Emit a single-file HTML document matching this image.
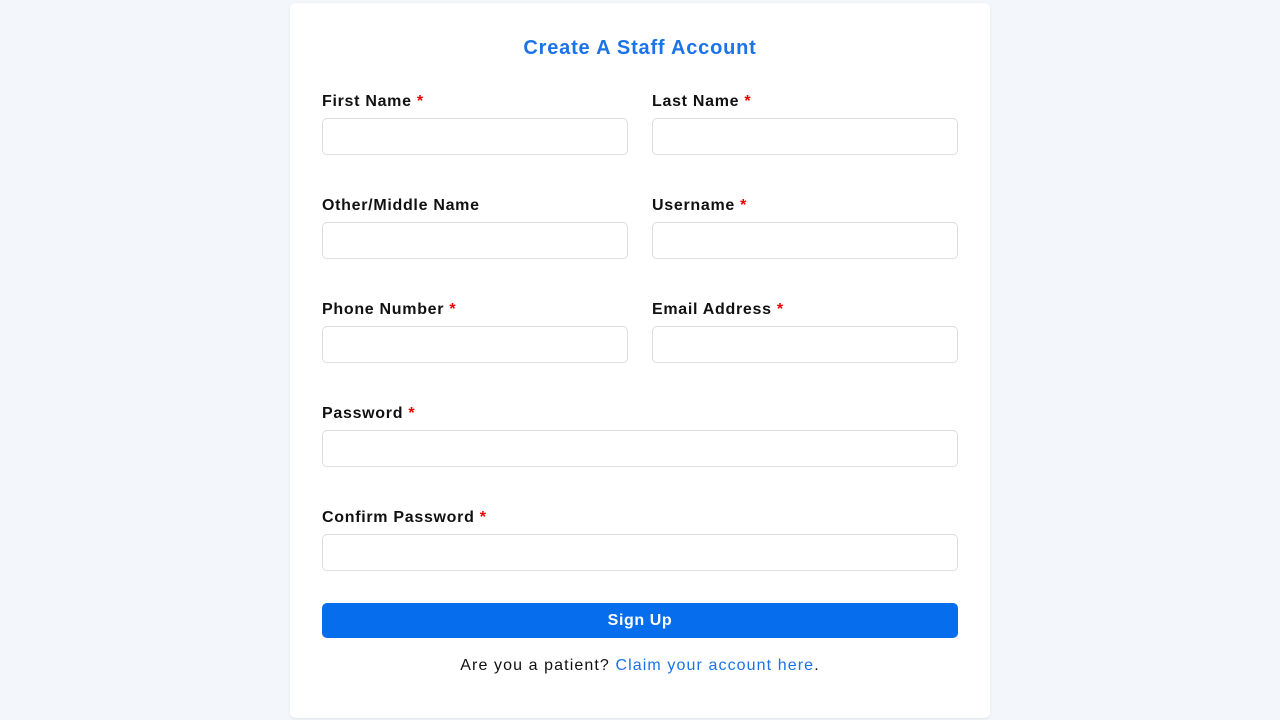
<!DOCTYPE html>
<html><head><style>
body{margin:0;background:#f3f6fb;font-family:"Liberation Sans",sans-serif;width:1280px;height:720px;position:relative;overflow:hidden}
.card{position:absolute;left:290px;top:3px;width:700px;height:715px;background:#fff;border-radius:6px;box-shadow:0 1px 3px rgba(0,0,0,.08)}
.t{position:absolute;left:0;width:1280px;top:37px;text-align:center;color:#1a73e8;font-size:20px;font-weight:bold;letter-spacing:.8px}
.l{position:absolute;font-size:16px;font-weight:bold;color:#111;letter-spacing:.7px}
.l span{color:#e00}
.i{position:absolute;height:37px;border:1px solid #ddd;border-radius:5px;box-sizing:border-box;background:#fff}
.btn{position:absolute;left:322px;top:603px;width:636px;height:35px;background:#066ded;border-radius:5px;color:#fff;font-weight:bold;font-size:16px;text-align:center;line-height:35px;letter-spacing:.6px}
.f{position:absolute;left:0;width:1280px;top:657px;text-align:center;font-size:16px;color:#111;letter-spacing:1.1px}
.f a{color:#1a73e8;text-decoration:none}
</style></head><body>
<div class="card"></div>
<div class="t">Create A Staff Account</div>
<div class="l" style="left:322px;top:93px">First Name <span>*</span></div>
<div class="i" style="left:322px;top:118px;width:306px"></div>
<div class="l" style="left:652px;top:93px">Last Name <span>*</span></div>
<div class="i" style="left:652px;top:118px;width:306px"></div>
<div class="l" style="left:322px;top:197px">Other/Middle Name</div>
<div class="i" style="left:322px;top:222px;width:306px"></div>
<div class="l" style="left:652px;top:197px">Username <span>*</span></div>
<div class="i" style="left:652px;top:222px;width:306px"></div>
<div class="l" style="left:322px;top:301px">Phone Number <span>*</span></div>
<div class="i" style="left:322px;top:326px;width:306px"></div>
<div class="l" style="left:652px;top:301px">Email Address <span>*</span></div>
<div class="i" style="left:652px;top:326px;width:306px"></div>
<div class="l" style="left:322px;top:405px">Password <span>*</span></div>
<div class="i" style="left:322px;top:430px;width:636px"></div>
<div class="l" style="left:322px;top:509px">Confirm Password <span>*</span></div>
<div class="i" style="left:322px;top:534px;width:636px"></div>
<div class="btn">Sign Up</div>
<div class="f">Are you a patient? <a>Claim your account here</a>.</div>
</body></html>
